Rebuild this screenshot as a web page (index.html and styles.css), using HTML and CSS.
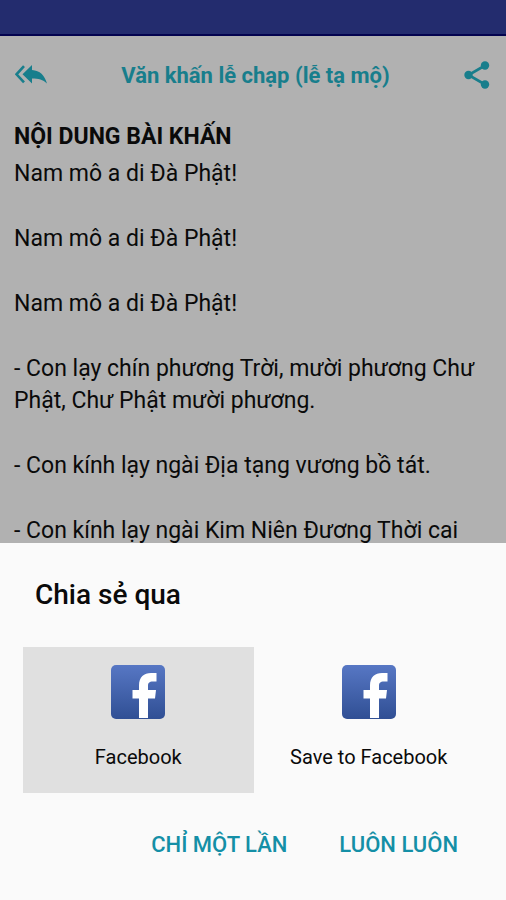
FILE: index.html
```
<!doctype html>
<html lang="vi">
  <head>
    <meta charset="UTF-8" />
    <meta name="viewport" content="width=device-width, initial-scale=1.0" />
    <title>Văn khấn lễ chạp (lễ tạ mộ)</title>
    <link rel="stylesheet" href="styles.css">
  </head>
  <body>
    <div class="status-bar"></div>

    <main class="page">
      <header class="toolbar">
        <button class="icon-btn" type="button" aria-label="Quay lại">
          <svg class="icon-back" viewBox="0 0 32 20" fill="currentColor">
            <path d="M17 0v5C25 5.500 29.500 10 32 18.500C28 14.500 23.500 13.500 17 13.500v5L7.500 9.300Z" />
            <path d="M9 1.200L1.500 9.300L9 17.300" fill="none" stroke="currentColor" stroke-width="2.600" />
          </svg>
        </button>
        <h1>Văn khấn lễ chạp (lễ tạ mộ)</h1>
        <button class="icon-btn" type="button" aria-label="Chia sẻ">
          <svg class="icon-share" viewBox="0 0 26 28" fill="currentColor">
            <path d="M21 4.500L4.500 14L21 23.500" fill="none" stroke="currentColor" stroke-width="2.600" />
            <circle cx="21" cy="4.500" r="4.200" />
            <circle cx="4.500" cy="14" r="4.200" />
            <circle cx="21" cy="23.500" r="4.200" />
          </svg>
        </button>
      </header>

      <article class="prayer">
        <h2>NỘI DUNG BÀI KHẤN</h2>
        <p>Nam mô a di Đà Phật!</p>
        <p>Nam mô a di Đà Phật!</p>
        <p>Nam mô a di Đà Phật!</p>
        <p>- Con lạy chín phương Trời, mười phương Chư Phật, Chư Phật mười phương.</p>
        <p>- Con kính lạy ngài Địa tạng vương bồ tát.</p>
        <p>- Con kính lạy ngài Kim Niên Đương Thời cai</p>
      </article>
    </main>

    <section class="sheet" aria-labelledby="sheet-title">
      <h2 id="sheet-title">Chia sẻ qua</h2>

      <div class="targets">
        <button class="target selected" type="button">
          <svg class="app-icon" viewBox="0 0 54 54">
            <defs>
              <linearGradient id="fb-blue" x1="0" y1="0" x2="0" y2="1">
                <stop offset="0" stop-color="#5777c4" />
                <stop offset="1" stop-color="#304f94" />
              </linearGradient>
            </defs>
            <rect width="54" height="54" rx="5" fill="url(#fb-blue)" />
            <path d="M28 53V33.500h-6.500V25H28v-4.500C28 12 33 8 40 8h5.500v8.500H42c-4 0-5 1.500-5 4.500v4h8l-1 8.500h-7V53z" fill="#fff" />
          </svg>
          <span>Facebook</span>
        </button>
        <button class="target" type="button">
          <svg class="app-icon" viewBox="0 0 54 54">
            <rect width="54" height="54" rx="5" fill="url(#fb-blue)" />
            <path d="M28 53V33.500h-6.500V25H28v-4.500C28 12 33 8 40 8h5.500v8.500H42c-4 0-5 1.500-5 4.500v4h8l-1 8.500h-7V53z" fill="#fff" />
          </svg>
          <span>Save to Facebook</span>
        </button>
      </div>

      <div class="actions">
        <button class="btn" type="button">CHỈ MỘT LẦN</button>
        <button class="btn" type="button">LUÔN LUÔN</button>
      </div>
    </section>
  </body>
</html>
```

FILE: styles.css
```
:root {
  --status: #232c6e;
  --status-line: #03034f;
  --dimmed: #b1b1b1;
  --dimmed-teal: #187e8c;
  --teal: #148fa6;
  --sheet: #fafafa;
  --selected: #e0e0e0;
}

* {
  margin: 0;
  padding: 0;
  box-sizing: border-box;
}

body {
  font-family: Roboto, "Liberation Sans", sans-serif;
  background: var(--dimmed);
  color: #0a0a0a;
  height: 100vh;
  display: flex;
  flex-direction: column;
}

button {
  border: none;
  background: none;
  font: inherit;
  color: inherit;
  cursor: pointer;
}

svg {
  display: block;
}

.status-bar {
  flex: none;
  height: 36px;
  background: var(--status);
  border-bottom: 2px solid var(--status-line);
}

.page {
  flex: 1;
  min-height: 0;
  overflow: hidden;
}

.toolbar {
  display: flex;
  align-items: center;
  justify-content: space-between;
  height: 78px;
  padding: 0 16px 0 15px;
  color: var(--dimmed-teal);
}

.toolbar h1 {
  font-size: 22px;
  font-weight: 700;
}

.icon-back {
  width: 32px;
  height: 20px;
}

.icon-share {
  width: 26px;
  height: 28px;
}

.prayer {
  padding: 7px 14px 0;
  font-size: 23px;
  line-height: 32px;
}

.prayer h2 {
  font-size: 23px;
  font-weight: 700;
  margin-bottom: 5px;
}

.prayer p {
  margin-bottom: 33px;
}

.prayer p:last-child {
  margin-bottom: 0;
}

.sheet {
  flex: none;
  padding: 32px 22px 31px 23px;
  background: var(--sheet);
}

.sheet h2 {
  padding: 0 12px;
  font-size: 28px;
  font-weight: 500;
  line-height: 40px;
}

.targets {
  display: grid;
  grid-template-columns: 1fr 1fr;
  margin-top: 32px;
}

.target {
  display: flex;
  flex-direction: column;
  align-items: center;
  gap: 24px;
  padding: 18px 8px 22px;
  font-size: 20px;
  line-height: 28px;
}

.target.selected {
  background: var(--selected);
}

.app-icon {
  width: 54px;
  height: 54px;
}

.actions {
  display: flex;
  justify-content: flex-end;
  gap: 20px;
  margin-top: 28px;
  padding-right: 10px;
}

.btn {
  padding: 0 16px;
  font-size: 22px;
  font-weight: 500;
  line-height: 48px;
  color: var(--teal);
}
```
